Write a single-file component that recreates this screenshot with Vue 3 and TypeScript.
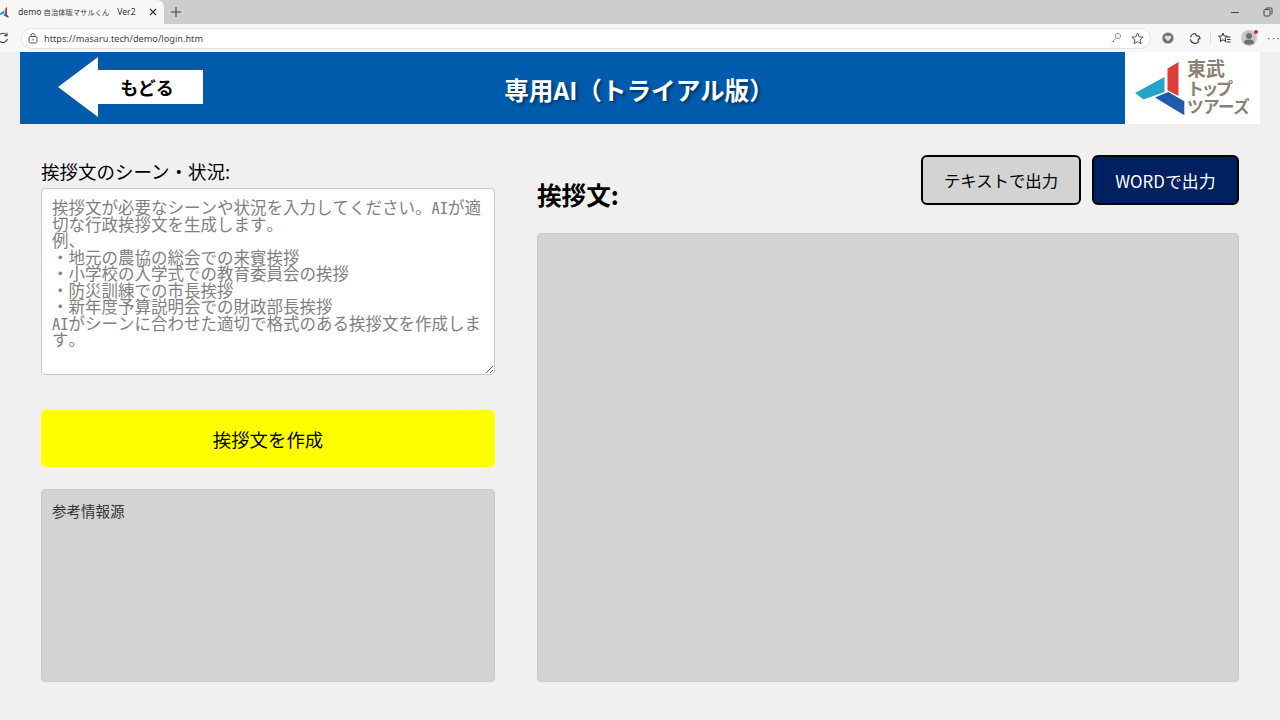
<script setup lang="ts">
const placeholder = `挨拶文が必要なシーンや状況を入力してください。AIが適切な行政挨拶文を生成します。
例、
・地元の農協の総会での来賓挨拶
・小学校の入学式での教育委員会の挨拶
・防災訓練での市長挨拶
・新年度予算説明会での財政部長挨拶
AIがシーンに合わせた適切で格式のある挨拶文を作成します。`
</script>

<template>
  <div class="app">
    <div class="browser">
      <div class="tabstrip">
        <div class="tab">
          <svg class="favicon" width="12" height="12" viewBox="0 0 12 12">
            <path d="M8 0.5 L6 3 L6 8 L8 9.5 Z" fill="#d9403a" />
            <path d="M0 7.5 L5.5 4.5 L5.5 7.5 L1.5 9 Z" fill="#22a5c8" />
            <path d="M4 8.8 L6.5 8 L9.5 10 L9.5 12 Z" fill="#1f5ba8" />
          </svg>
          <span class="tab-title">demo <span class="tab-cjk">自治体版マサルくん</span><span class="tab-ver">Ver2</span></span>
          <svg class="tab-close" width="8" height="8" viewBox="0 0 8 8">
            <path d="M1 1 L7 7 M7 1 L1 7" stroke="#333" stroke-width="1.2" />
          </svg>
        </div>
        <svg class="tab-plus" width="12" height="12" viewBox="0 0 12 12">
          <path d="M6 1 V11 M1 6 H11" stroke="#444" stroke-width="1.1" />
        </svg>
        <div class="spacer"></div>
        <svg class="win-btn" width="10" height="10" viewBox="0 0 10 10">
          <path d="M1 5.5 H9" stroke="#444" stroke-width="1" />
        </svg>
        <svg class="win-btn win-last" width="10" height="10" viewBox="0 0 10 10">
          <rect x="1" y="2.5" width="6" height="6.5" rx="1.2" fill="none" stroke="#444" />
          <path d="M3 2.5 V1.5 Q3 1 3.5 1 H8 Q9 1 9 2 V6.5 Q9 7 8 7" fill="none" stroke="#444" />
        </svg>
      </div>
      <div class="toolbar">
        <svg class="reload" width="12" height="12" viewBox="0 0 12 12">
          <path d="M9.5 3 A4.6 4.6 0 1 0 10.4 7" fill="none" stroke="#444" stroke-width="1.1" />
          <path d="M10 0.8 V3.6 H7.2" fill="none" stroke="#444" stroke-width="1.1" />
        </svg>
        <div class="omnibox">
          <svg class="lock" width="10" height="11" viewBox="0 0 10 11">
            <rect x="1" y="3.5" width="8" height="6.5" rx="1.5" fill="none" stroke="#555" />
            <path d="M3 3.5 V2.5 A2 2 0 0 1 7 2.5 V3.5" fill="none" stroke="#555" />
            <circle cx="5" cy="6.8" r="0.8" fill="#555" />
          </svg>
          <span class="url">https://masaru.tech/demo/login.htm</span>
          <div class="spacer"></div>
          <svg class="key" width="12" height="12" viewBox="0 0 12 12">
            <circle cx="8" cy="4" r="2.6" fill="none" stroke="#999" />
            <path d="M6 6 L1.5 10.5 M3 9 L4.2 10.2" fill="none" stroke="#999" />
          </svg>
          <svg class="star" width="13" height="13" viewBox="0 0 13 13">
            <path d="M6.5 1 L8.1 4.8 L12.2 5.1 L9.1 7.8 L10 11.8 L6.5 9.7 L3 11.8 L3.9 7.8 L0.8 5.1 L4.9 4.8 Z" fill="none" stroke="#555" />
          </svg>
        </div>
        <svg class="tool-icon shield" width="12" height="12" viewBox="0 0 12 12">
          <circle cx="6" cy="6" r="5.6" fill="#6f6f6f" />
          <path d="M6 9.4 L2.9 6 Q2.2 4 3.8 3.5 Q5.2 3.2 6 4.4 Q6.8 3.2 8.2 3.5 Q9.8 4 9.1 6 Z" fill="#dedede" />
        </svg>
        <svg class="tool-icon puzzle" width="12" height="12" viewBox="0 0 12 12">
          <path d="M6.6 1.6 A4.6 4.6 0 0 0 1.6 5.4 M1.4 7.2 A4.6 4.6 0 0 0 9.6 9.6 Q8.6 8.2 9.4 7.2 Q10.2 6.6 11 6.6 Q10.8 5 9.8 4 Q8.6 4.6 7.6 3.8 Q6.8 2.8 6.6 1.6" fill="none" stroke="#444" stroke-width="1.2" />
        </svg>
        <span class="divider"></span>
        <svg class="tool-icon fav" width="13" height="12" viewBox="0 0 13 12">
          <path d="M5 1 L6.2 4 L9.4 4.2 L7 6.3 L7.8 9.5 L5 7.8 L2.2 9.5 L3 6.3 L0.6 4.2 L3.8 4 Z" fill="none" stroke="#333" />
          <path d="M9 5 H12.5 M9 7.5 H12.5 M8.5 10 H12.5" stroke="#333" />
        </svg>
        <span class="avatar">
          <svg width="16" height="16" viewBox="0 0 16 16">
            <circle cx="8" cy="8" r="8" fill="#c6c6c6" />
            <circle cx="8" cy="6" r="3" fill="#6e6e6e" />
            <path d="M2.8 13 Q3.4 9.6 8 9.6 Q12.6 9.6 13.2 13 Q8 16.6 2.8 13 Z" fill="#6e6e6e" />
          </svg>
          <i class="dot"></i>
        </span>
        <span class="more">···</span>
      </div>
    </div>

    <header class="banner">
      <div class="banner-main">
        <button class="back" type="button">
          <span class="back-head"></span>
          <span class="back-body">もどる</span>
        </button>
        <h1 class="title">専用AI（トライアル版）</h1>
      </div>
      <div class="logo">
        <svg class="logo-mark" width="52" height="56" viewBox="0 0 52 56">
          <path d="M43.5 0 L32.5 6.6 V28.3 L43.5 34 Z" fill="#dc3f3a" />
          <path d="M0 31 L29.5 15 V30 L8.5 37.5 Z" fill="#22a5c8" />
          <path d="M20 35.6 L33.3 30 L49.3 39.3 V53.3 Z" fill="#1f5ba8" />
        </svg>
        <div class="logo-text">
          <span class="logo-l1">東武</span>
          <span class="logo-l2">トップ</span>
          <span class="logo-l3">ツアーズ</span>
        </div>
      </div>
    </header>

    <main class="content">
      <section class="left">
        <label class="field-label" for="scene">挨拶文のシーン・状況:</label>
        <textarea id="scene" class="scene" :placeholder="placeholder"></textarea>
        <button class="create" type="button">挨拶文を作成</button>
        <div class="sources">参考情報源</div>
      </section>
      <section class="right">
        <div class="right-head">
          <h2 class="result-title">挨拶文:</h2>
          <div class="actions">
            <button class="act act-text" type="button">テキストで出力</button>
            <button class="act act-word" type="button">WORDで出力</button>
          </div>
        </div>
        <div class="result"></div>
      </section>
    </main>
  </div>
</template>

<style>
html, body { margin: 0; background: #f0f0f0; }
</style>

<style scoped>
.app {
  width: 1280px;
  height: 720px;
  display: flex;
  flex-direction: column;
  background: #f0f0f0;
  overflow: hidden;
  font-family: "Noto Sans CJK JP", "Noto Sans", sans-serif;
  color: #000;
}
.browser { height: 52px; flex: none; }
.spacer { flex: 1; }
.tabstrip {
  height: 24px;
  background: #cdcdcd;
  display: flex;
  align-items: center;
}
.tab {
  width: 164px;
  height: 24px;
  box-sizing: border-box;
  background: #f7f7f7;
  border-top-right-radius: 7px;
  display: flex;
  align-items: center;
}
.favicon { flex: none; margin-left: -1px; }
.tab-title {
  margin-left: 7px;
  font-size: 8.6px;
  color: #333;
  white-space: nowrap;
  font-family: "Noto Sans", "Noto Sans CJK JP", sans-serif;
}
.tab-cjk { font-size: 7.3px; font-family: "Noto Sans CJK JP", sans-serif; }
.tab-ver { margin-left: 8px; }
.tab-close { margin-left: auto; margin-right: 7px; flex: none; }
.tab-plus { margin-left: 6px; flex: none; }
.win-btn { flex: none; margin-right: 16px; }
.win-btn.win-last { margin-right: 7px; margin-left: 7px; }
.toolbar {
  height: 28px;
  background: #f7f7f7;
  display: flex;
  align-items: center;
}
.reload { margin-left: -3px; flex: none; }
.omnibox {
  margin-left: 12px;
  width: 1130px;
  height: 21px;
  box-sizing: border-box;
  background: #fff;
  border: 1px solid #e3e3e3;
  border-radius: 11px;
  display: flex;
  align-items: center;
  padding: 0 6px;
  flex: none;
}
.lock { flex: none; }
.url {
  margin-left: 6px;
  font-size: 9.2px;
  color: #444;
  font-family: "Noto Sans", sans-serif;
}
.key { margin-right: 9px; }
.tool-icon { flex: none; }
.shield { margin-left: 11px; }
.puzzle { margin-left: 15px; }
.divider { width: 1px; height: 12px; background: #ddd; margin-left: 9px; }
.fav { margin-left: 8px; }
.avatar { position: relative; margin-left: 10px; width: 16px; height: 16px; flex: none; }
.avatar svg { display: block; }
.dot {
  position: absolute;
  right: -1px;
  top: 0;
  width: 4px;
  height: 4px;
  border-radius: 50%;
  background: #e0202a;
}
.more { margin-left: 9px; font-size: 9px; color: #333; letter-spacing: -0.5px; white-space: nowrap; }

.banner {
  height: 72px;
  flex: none;
  margin: 0 20px;
  display: flex;
}
.banner-main {
  flex: 1;
  background: #005bac;
  position: relative;
  display: flex;
  align-items: center;
  justify-content: center;
  padding-left: 133px;
}
.back {
  position: absolute;
  left: 38px;
  top: 5px;
  display: flex;
  align-items: center;
  background: none;
  border: 0;
  padding: 0;
  height: 60px;
  font-family: inherit;
}
.back-head {
  width: 0;
  height: 0;
  border-style: solid;
  border-width: 30px 40px 30px 0;
  border-color: transparent #fff transparent transparent;
}
.back-body {
  width: 106px;
  height: 34px;
  background: #fff;
  color: #000;
  font-size: 18px;
  font-weight: 700;
  line-height: 34px;
  text-align: center;
  padding-right: 6px;
  box-sizing: border-box;
  margin-left: -1px;
}
.title {
  margin: 2px 0 0;
  font-size: 24.6px;
  font-weight: 700;
  color: #fff;
  text-shadow: 2px 2px 3px rgba(0, 0, 0, 0.45);
  line-height: 1;
}
.logo {
  width: 135px;
  background: #fff;
  display: flex;
  align-items: flex-start;
  box-sizing: border-box;
  padding: 10px 0 0 10px;
  flex: none;
}
.logo-mark { flex: none; display: block; }
.logo-text {
  display: flex;
  flex-direction: column;
  color: #8c8072;
  font-weight: 700;
  line-height: 1;
  margin-top: -4px;
  white-space: nowrap;
}
.logo-l1 { font-size: 19px; line-height: 20px; }
.logo-l2 { font-size: 17px; line-height: 19px; letter-spacing: -2.5px; }
.logo-l3 { font-size: 16.5px; line-height: 18px; letter-spacing: -0.5px; }

.content {
  flex: 1;
  min-height: 0;
  display: grid;
  grid-template-columns: 454px 702px;
  column-gap: 42px;
  padding: 0 41px 38px;
}
.left, .right { display: flex; flex-direction: column; min-height: 0; }
.field-label {
  font-size: 18.5px;
  line-height: 26px;
  margin-top: 34px;
  margin-bottom: 4px;
}
.scene {
  display: block;
  width: 454px;
  height: 187px;
  box-sizing: border-box;
  margin: 0;
  padding: 10px 10px;
  font-family: "Noto Sans Mono CJK JP", "Noto Sans CJK JP", monospace;
  font-size: 16.5px;
  line-height: 16.5px;
  background: #fff;
  border: 1px solid #ccc;
  border-radius: 4px;
  outline: none;
}
.scene::placeholder { color: #808080; opacity: 1; }
.create {
  margin-top: 35px;
  height: 57px;
  background: #ff0;
  border: 0;
  border-radius: 5px;
  font-family: inherit;
  font-size: 18.4px;
  color: #000;
  padding: 0;
}
.sources {
  margin-top: 22px;
  flex: 1;
  background: #d3d3d3;
  border: 1px solid #ccc;
  border-radius: 4px;
  box-sizing: border-box;
  padding: 10px 10px;
  font-size: 14.5px;
  line-height: 22px;
  color: #333;
}
.right-head {
  height: 78px;
  margin-top: 31px;
  flex: none;
  display: flex;
  justify-content: space-between;
  align-items: flex-start;
}
.result-title {
  margin: 22px 0 0;
  font-size: 24.6px;
  font-weight: 700;
  line-height: 34px;
}
.actions { display: flex; gap: 11px; }
.act {
  height: 50px;
  box-sizing: border-box;
  border: 2px solid #000;
  border-radius: 6px;
  font-family: inherit;
  font-size: 16.4px;
  padding: 0;
}
.act-text { width: 160px; background: #d3d3d3; color: #000; }
.act-word { width: 147px; background: #002060; color: #fff; font-size: 16.9px; }
.result {
  flex: 1;
  background: #d3d3d3;
  border-radius: 4px;
  border: 1px solid #ccc;
  box-sizing: border-box;
}
</style>
